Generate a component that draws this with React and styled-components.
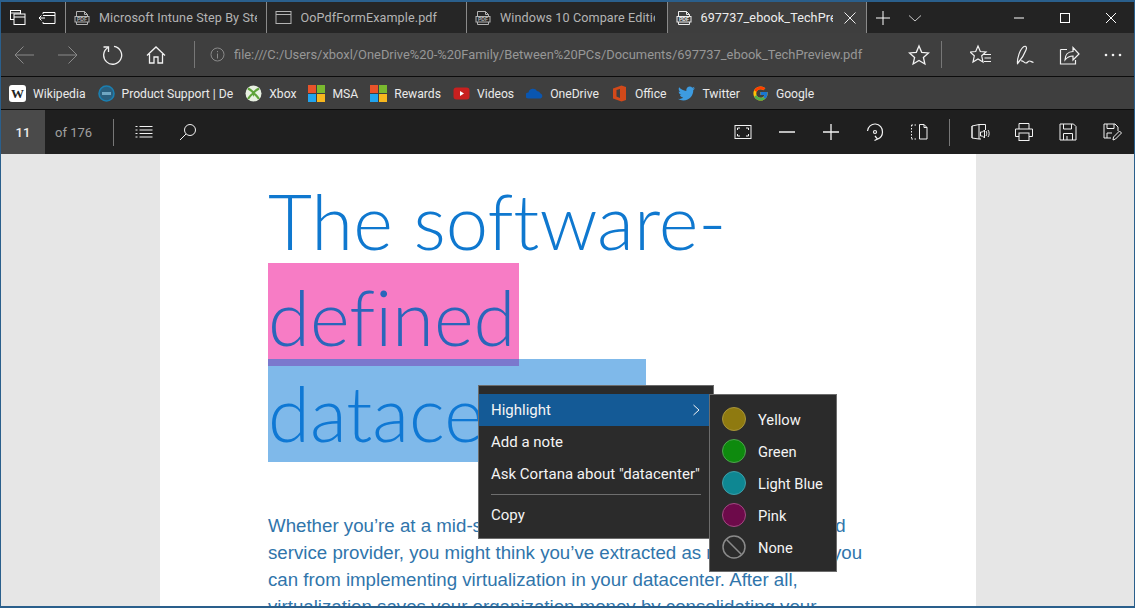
import React from "react";
import styled, { createGlobalStyle } from "styled-components";
import { FcGoogle } from "react-icons/fc";
import { FaTwitter } from "react-icons/fa";

const Global = createGlobalStyle`
  html, body { margin: 0; padding: 0; background: #e6e6e6; }
  #root { width: 1135px; height: 608px; overflow: hidden; }
  * { box-sizing: border-box; }
`;

const UI = `Roboto, "Noto Sans", "Liberation Sans", sans-serif`;

const Window = styled.div`
  position: relative;
  width: 1135px;
  height: 608px;
  overflow: hidden;
  display: flex;
  flex-direction: column;
  border: solid #2a5f8c;
  border-width: 2px 1px 2px 1px;
  font-family: ${UI};
  background: #e6e6e6;
`;

const TabStrip = styled.div`
  height: 31px;
  flex: none;
  display: flex;
  align-items: stretch;
  background: #232323;
  color: #fff;
`;

const TabTools = styled.div`
  width: 64px;
  flex: none;
  display: flex;
  align-items: center;
  padding-left: 8px;
  gap: 12px;
`;

const Tab = styled.div`
  width: 200.5px;
  flex: none;
  display: flex;
  align-items: center;
  padding-left: 8px;
  border-left: 1px solid #8a8a8a;
  background: ${(p) => (p.$active ? "#3e3e3e" : "#262626")};
  color: ${(p) => (p.$active ? "#ededed" : "#b4b4b4")};
  border-right: ${(p) => (p.$active ? "1px solid #8a8a8a" : "none")};
`;

const TabTitle = styled.span`
  margin-left: 9px;
  width: ${(p) => p.$width}px;
  overflow: hidden;
  white-space: nowrap;
  font-size: 12.6px;
  letter-spacing: 0.1px;
`;

const TabClose = styled.div`
  width: 32px;
  display: flex;
  justify-content: center;
  margin-left: 1px;
`;

const Caption = styled.div`
  margin-left: auto;
  display: flex;
  align-items: center;
`;

const CaptionButton = styled.div`
  width: 46px;
  display: flex;
  justify-content: center;
`;

const SmallButton = styled.div`
  width: 32px;
  display: flex;
  justify-content: center;
  align-items: center;
`;

const NavBar = styled.div`
  height: 44px;
  flex: none;
  display: flex;
  align-items: center;
  padding-left: 1px;
  background: #3f3f3f;
  border-bottom: 1px solid #0c0c0c;
  color: #f2f2f2;
`;

const IconButton = styled.div`
  width: 44px;
  height: 44px;
  flex: none;
  display: flex;
  align-items: center;
  justify-content: center;
  margin-left: ${(p) => p.$ml || 0}px;
  color: ${(p) => (p.$dim ? "#8a8a8a" : "inherit")};
`;

const VLine = styled.div`
  width: 1px;
  height: 27px;
  flex: none;
  margin: ${(p) => p.$margin};
  background: #777;
`;

const Url = styled.div`
  flex: none;
  width: 638px;
  margin-left: -5px;
  font-size: 12.9px;
  color: #979797;
  white-space: nowrap;
  overflow: hidden;
`;

const FavBar = styled.div`
  height: 33px;
  flex: none;
  display: flex;
  align-items: center;
  padding: 1px 0 0 8px;
  gap: 12px;
  background: #3f3f3f;
  border-bottom: 1px solid #0c0c0c;
`;

const Fav = styled.div`
  display: flex;
  align-items: center;
  gap: 7px;
  font-size: 12.15px;
  color: #eaeaea;
  white-space: nowrap;
`;

const FavIcon = styled.div`
  width: 17px;
  height: 17px;
  flex: none;
  display: flex;
  align-items: center;
  justify-content: center;
`;

const WikiBadge = styled.div`
  width: 17px;
  height: 17px;
  border-radius: 3px;
  background: #fff;
  color: #222;
  font: bold 13px "Liberation Serif", serif;
  display: flex;
  align-items: center;
  justify-content: center;
`;

const PdfBar = styled.div`
  height: 44px;
  flex: none;
  display: flex;
  align-items: center;
  background: #1f1f1f;
  color: #f2f2f2;
`;

const PageBox = styled.div`
  width: 44px;
  height: 44px;
  flex: none;
  display: flex;
  align-items: center;
  justify-content: center;
  background: #4a4a4a;
  font-size: 13px;
  font-weight: 500;
  color: #ededed;
`;

const PageCount = styled.div`
  width: 68px;
  padding-left: 10px;
  font-size: 13px;
  color: #a0a0a0;
`;

const PdfRight = styled.div`
  margin-left: auto;
  display: flex;
  align-items: center;
`;

const Viewer = styled.div`
  flex: 1;
  min-height: 0;
  overflow: hidden;
  display: flex;
  justify-content: center;
  padding-left: 1px;
  background: #e6e6e6;
`;

const Page = styled.div`
  width: 816px;
  height: 700px;
  flex: none;
  background: #fff;
  padding: 13px 0 0 108px;
`;

const TitleLine = styled.div`
  width: ${(p) => p.$width || 600}px;
  height: 103px;
  margin-bottom: -7px;
  padding-top: 6px;
  background: ${(p) => p.$bg || "transparent"};
  font-family: "Lato", "Open Sans", sans-serif;
  font-weight: 300;
  font-size: 76px;
  font-variant-ligatures: none;
  line-height: 96px;
  white-space: nowrap;
  color: ${(p) => p.$color || "#0f78cf"};
`;

const Body = styled.div`
  margin-top: 57px;
  font-family: "Liberation Sans", Arial, sans-serif;
  font-size: 18.7px;
  line-height: 27px;
  color: #3075ab;
  white-space: nowrap;
`;

const Menu = styled.div`
  position: absolute;
  left: 477px;
  top: 383px;
  width: 236px;
  padding: 8px 0 7px;
  background: #2b2b2b;
  border: 1px solid #6c6c6c;
  color: #f4f4f4;
  font-size: 15px;
`;

const MenuRow = styled.div`
  height: 32px;
  display: flex;
  align-items: center;
  justify-content: space-between;
  padding: 0 12px;
  white-space: nowrap;
  background: ${(p) => (p.$active ? "#145a96" : "transparent")};
`;

const MenuRule = styled.div`
  height: 1px;
  margin: 4px 12px;
  background: #6e6e6e;
`;

const SubMenu = styled.div`
  position: absolute;
  left: 708px;
  top: 392px;
  width: 128px;
  height: 178px;
  padding: 8px 0 0 12px;
  background: #2b2b2b;
  border: 1px solid #6c6c6c;
  color: #f4f4f4;
  font-size: 14.7px;
`;

const SwatchRow = styled.div`
  height: 32px;
  display: flex;
  align-items: center;
  gap: 12px;
  white-space: nowrap;
`;

const SwatchLabel = styled.span`
  padding-top: 2px;
`;

const Swatch = styled.div`
  width: 24px;
  height: 24px;
  border-radius: 50%;
  flex: none;
  background: ${(p) => p.$color};
  border: 1px solid ${(p) => p.$ring};
`;

const Glyph = styled.svg`
  display: block;
  flex: none;
  fill: none;
  stroke: currentColor;
  stroke-width: ${(p) => p.$sw || 1};
`;

const I = ({ s = 20, v = 20, sw, children }) => (
  <Glyph width={s} height={s} viewBox={`0 0 ${v} ${v}`} $sw={sw}>{children}</Glyph>
);

const PdfIcon = () => (
  <I s={16} v={16}>
    <path d="M2.5 6V1.5h8l3 3V6M2.5 12v2.5h11V12M10.5 1.5v3h3" />
    <rect x="1" y="6.5" width="14" height="5.5" />
    <text x="8" y="11" fontSize="5" fontWeight="700" textAnchor="middle" fill="currentColor" stroke="none" fontFamily="Liberation Sans">PDF</text>
  </I>
);

function MsLogo() {
  return (
    <I s={17} v={17}>
      <rect x="0" y="0" width="8" height="8" fill="#e8532a" stroke="none" />
      <rect x="9" y="0" width="8" height="8" fill="#7ab92f" stroke="none" />
      <rect x="0" y="9" width="8" height="8" fill="#21a4ee" stroke="none" />
      <rect x="9" y="9" width="8" height="8" fill="#f7b71e" stroke="none" />
    </I>
  );
}

const tabs = [
  { title: "Microsoft Intune Step By Step", icon: <PdfIcon />, w: 158 },
  { title: "OoPdfFormExample.pdf", icon: <I s={17} v={17}><rect x="1" y="2.5" width="15" height="12" /><path d="M1 5.5h15" /></I>, w: 158 },
  { title: "Windows 10 Compare Edition", icon: <PdfIcon />, w: 155 },
];

const favs = [
  ["Wikipedia", <WikiBadge>W</WikiBadge>],
  ["Product Support | De", <I s={17} v={17}><circle cx="8.5" cy="8.5" r="7.5" stroke="#1b7fb0" strokeWidth="1.6" fill="#2a5f7e" /><rect x="4" y="7" width="9" height="3" fill="#6fa6c2" stroke="none" /></I>],
  ["Xbox", <I s={17} v={17}><circle cx="8.5" cy="8.5" r="8" fill="#e8f0e2" stroke="none" /><path d="M3 3.500C6 5 8 7 8.500 8.500 9 7 11 5 14 3.500M3 14c2-3 4-5 5.500-5.500C10 9 12 11 14 14" stroke="#5ea33a" strokeWidth="2.200" /></I>],
  ["MSA", <MsLogo />],
  ["Rewards", <MsLogo />],
  ["Videos", <I s={17} v={17}><rect x="0.5" y="2.5" width="16" height="12" rx="3" fill="#c8201f" stroke="none" /><path d="M7 6l4 2.5L7 11z" fill="#fff" stroke="none" /></I>],
  ["OneDrive", <I s={17} v={17}><path d="M2.5 13.500a3 3 0 0 1 0-6 4.600 4.600 0 0 1 8.500-1.500 3.800 3.800 0 0 1 3.500 2.500 2.600 2.600 0 0 1 0 5z" fill="#0a56b0" stroke="none" /></I>],
  ["Office", <I s={17} v={17}><path d="M2 3.500L10.500.5 15 2v13l-4.500 1.500L2 13.500z" fill="#d2491a" stroke="none" /><path d="M5.500 5l3.500-1v9l-3.500-1.500z" fill="#3f3f3f" stroke="none" /></I>],
  ["Twitter", <FaTwitter size={17} color="#3d9be0" />],
  ["Google", <FcGoogle size={17} />],
];

const swatches = [
  ["Yellow", "#8f7a10", "#a8953a"],
  ["Green", "#0e8a0e", "#4fa24f"],
  ["Light Blue", "#0e8792", "#3f9ea8"],
  ["Pink", "#6d0a4a", "#a24a82"],
];

export default function App() {
  return (
    <>
      <Global />
      <Window>
        <TabStrip>
          <TabTools>
            <I s={17} v={17}><rect x="1.5" y="1.5" width="10" height="9" /><rect x="5" y="5" width="11" height="10.5" fill="#232323" /><path d="M5 8h11M1.5 4h10" /></I>
            <I s={18} v={18}><path d="M1 9h6M3.5 6.5L1 9l2.5 2.5" /><path d="M5 5V3.500h12v11H5V13" /><path d="M5 6.500h12" /></I>
          </TabTools>
          {tabs.map((t) => (
            <Tab key={t.title}>
              {t.icon}
              <TabTitle $width={t.w}>{t.title}</TabTitle>
            </Tab>
          ))}
          <Tab $active>
            <PdfIcon />
            <TabTitle $width={133}>697737_ebook_TechPreview</TabTitle>
            <TabClose><I s={14} v={14}><path d="M1.500 1.500l11 11M12.500 1.500l-11 11" /></I></TabClose>
          </Tab>
          <SmallButton><I s={16} v={16}><path d="M8 1v14M1 8h14" /></I></SmallButton>
          <SmallButton><I s={14} v={14}><path d="M1 4.500L7 10l6-5.500" stroke="#c8c8c8" /></I></SmallButton>
          <Caption>
            <CaptionButton><I s={12} v={12}><path d="M1 6h10" /></I></CaptionButton>
            <CaptionButton><I s={12} v={12}><rect x="1.500" y="1.500" width="9" height="9" /></I></CaptionButton>
            <CaptionButton><I s={12} v={12}><path d="M1 1l10 10M11 1L1 11" /></I></CaptionButton>
          </Caption>
        </TabStrip>

        <NavBar>
          <IconButton $dim><I s={22} v={22}><path d="M2 11h19M10.500 2.500L2 11l8.500 8.500" /></I></IconButton>
          <IconButton $dim><I s={22} v={22}><path d="M1 11h19M11.500 2.500L20 11l-8.500 8.500" /></I></IconButton>
          <IconButton><I s={22} v={22} sw={1.3}><path d="M7 3.500A9 9 0 1 0 13 2.300" /><path d="M7.500 8V3H2.500" /></I></IconButton>
          <IconButton><I s={20} v={20} sw={1.3}><path d="M1 10.500L10 2l9 8.500M3.500 9v9H8v-6h4v6h4.500V9" /></I></IconButton>
          <VLine $margin="0 0 0 16px" />
          <IconButton><I s={15} v={15}><circle cx="7.500" cy="7.500" r="6.500" stroke="#8a8a8a" /><path d="M7.500 6.500v5M7.500 4v1.200" stroke="#8a8a8a" /></I></IconButton>
          <Url>file:///C:/Users/xboxl/OneDrive%20-%20Family/Between%20PCs/Documents/697737_ebook_TechPreview.pdf</Url>
          <IconButton $ml={25}><I s={22} v={22} sw={1.3}><path d="M11 2l2.700 6.300 6.800.6-5.100 4.500 1.500 6.600L11 16.500 5.100 20l1.500-6.600L1.500 8.900l6.800-.6z" /></I></IconButton>
          <VLine $margin="0 17px 0 0" />
          <IconButton><I s={22} v={22} sw={1.2}><path d="M8 2l2.300 5.500 5.700.5-4.300 3.800L13 18l-5-3.100L3 18l1.300-6.200L0 8l5.700-.5z" /><path d="M13 10.500h8M14.500 14h6.500M14 17.500h7" /></I></IconButton>
          <IconButton><I s={22} v={22} sw={1.2}><path d="M3.500 19.500C3 14 6 5 10 2.500c2.500-1 3 1.500 2 3.500C10.500 10 7.500 15 4 19c-.5.500-.5.500-.5.500zM7 17c2-1 3 2 5 2 1.500 0 2-2 3.500-2 1.500 0 2 1 4 1.500" /></I></IconButton>
          <IconButton><I s={22} v={22} sw={1.2}><path d="M2.500 5.500v14.500h15v-4M2.500 5.500H9" /><path d="M7 16c0-5 3-8.500 8-8.500V3.500l6 6.500-6 6v-4c-4 0-6 1.500-8 4z" /></I></IconButton>
          <IconButton><I s={20} v={20}><circle cx="3" cy="10" r="1.300" fill="currentColor" stroke="none" /><circle cx="10" cy="10" r="1.300" fill="currentColor" stroke="none" /><circle cx="17" cy="10" r="1.300" fill="currentColor" stroke="none" /></I></IconButton>
        </NavBar>

        <FavBar>
          {favs.map(([label, icon]) => (
            <Fav key={label}>
              <FavIcon>{icon}</FavIcon>
              {label}
            </Fav>
          ))}
        </FavBar>

        <PdfBar>
          <PageBox>11</PageBox>
          <PageCount>of 176</PageCount>
          <VLine $margin="0 8px 0 0" />
          <IconButton><I s={18} v={18}><path d="M4.500 3.500h13M4.500 7h13M4.500 10.500h13M4.500 14h13M.5 3.500h2M.5 7h2M.5 10.500h2M.5 14h2" /></I></IconButton>
          <IconButton><I s={18} v={18}><circle cx="11" cy="7" r="5.500" /><path d="M7 11l-6 6" /></I></IconButton>
          <PdfRight>
            <IconButton><I s={18} v={18}><rect x="1" y="2.500" width="16" height="13" /><path d="M3.500 7V5h2.500M12 5h2.500v2M14.500 11v2H12M6 13H3.500v-2" /></I></IconButton>
            <IconButton><I s={18} v={18} sw={1.500}><path d="M1 9h16" /></I></IconButton>
            <IconButton><I s={18} v={18} sw={1.300}><path d="M1 9h16M9 1v16" /></I></IconButton>
            <IconButton><I s={18} v={18} sw={1.200}><path d="M1.500 8A7.500 7.500 0 0 1 16.500 9a7.500 7.500 0 0 1-5 7" /><circle cx="9" cy="9" r="1.500" /><path d="M9 13l2.500 3-3 1.500" /></I></IconButton>
            <IconButton><I s={18} v={18}><path d="M1.500 2h6M1.500 16h6M1.500 2v14" strokeDasharray="1.500 1.500" /><path d="M9.500 1.500H14l3 3v11.500H9.500zM14 1.500v3h3" /></I></IconButton>
            <VLine $margin="0 8px 0 8px" />
            <IconButton><I s={20} v={20}><path d="M2 4l7-1.500V17l-7-1zM9 2.500h6.500V8M9 17h2M2 4v12" /><path d="M10.500 10h2l2-2v8l-2-2h-2zM16 9c1 1.500 1 3 0 5M18 8c1.500 2 1.500 5 0 7" /></I></IconButton>
            <IconButton><I s={20} v={20}><path d="M5 7V1.500h10V7M5 14.500H1.500V7h17v7.500H15" /><rect x="5" y="11" width="10" height="7.500" /></I></IconButton>
            <IconButton><I s={20} v={20}><path d="M2 2h13.500L18 4.500V18H2z" /><path d="M5.500 2v5h8V2M5.500 18v-6.500h9V18M9 14v4" /></I></IconButton>
            <IconButton><I s={20} v={20}><path d="M9 16H2V2h11l3 3v4" /><path d="M5 2v4.500h7V2M5 16v-5h5" /><path d="M11 18l.5-3 6-6 2 2-6 6z" /></I></IconButton>
          </PdfRight>
        </PdfBar>

        <Viewer>
          <Page>
            <TitleLine>The software-</TitleLine>
            <TitleLine $bg="#f77cc5" $width={251} $color="#2a66ba">defined</TitleLine>
            <TitleLine $bg="rgba(0,115,213,.5)" $width={378} $color="#0f78d4">datacenter</TitleLine>
            <Body>
              Whether you’re at a mid-sized business, large enterprise, or managed<br />
              service provider, you might think you’ve extracted as much value as you<br />
              can from implementing virtualization in your datacenter. After all,<br />
              virtualization saves your organization money by consolidating your
            </Body>
          </Page>
        </Viewer>

        <Menu>
          <MenuRow $active>
            Highlight
            <I s={12} v={12}><path d="M4.500 1L10 6l-5.500 5" /></I>
          </MenuRow>
          <MenuRow>Add a note</MenuRow>
          <MenuRow>Ask Cortana about "datacenter"</MenuRow>
          <MenuRule />
          <MenuRow>Copy</MenuRow>
        </Menu>

        <SubMenu>
          {swatches.map(([label, c, r]) => (
            <SwatchRow key={label}>
              <Swatch $color={c} $ring={r} />
              <SwatchLabel>{label}</SwatchLabel>
            </SwatchRow>
          ))}
          <SwatchRow>
            <I s={24} v={24} sw={1.500}><circle cx="12" cy="12" r="11" stroke="#8a8a8a" /><path d="M4.500 4.500l15 15" stroke="#8a8a8a" /></I>
            <SwatchLabel>None</SwatchLabel>
          </SwatchRow>
        </SubMenu>
      </Window>
    </>
  );
}
